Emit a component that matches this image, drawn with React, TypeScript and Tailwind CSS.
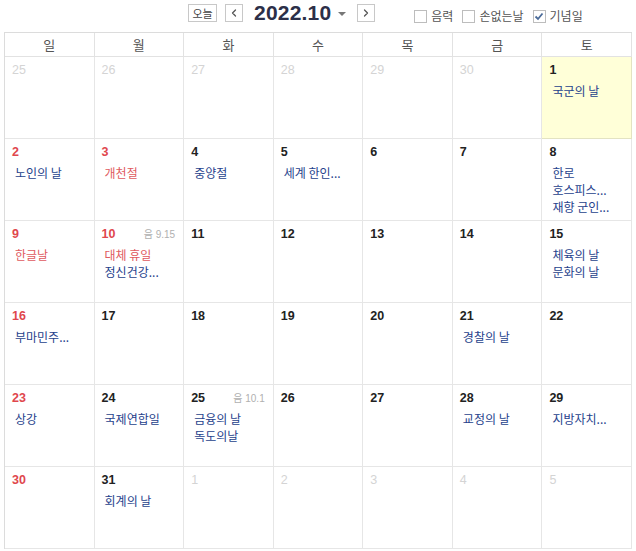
import { ChevronLeft, ChevronRight } from 'lucide-react';

type Ev = { t: string; red?: boolean };
type Day = { d: number; kind: 'other' | 'red' | 'normal'; events?: Ev[]; lunar?: string; today?: boolean };

const WEEKDAYS = ['일', '월', '화', '수', '목', '금', '토'];

const o = (d: number): Day => ({ d, kind: 'other' });
const n = (d: number, events: Ev[] = [], extra: Partial<Day> = {}): Day => ({ d, kind: 'normal', events, ...extra });
const r = (d: number, events: Ev[] = [], extra: Partial<Day> = {}): Day => ({ d, kind: 'red', events, ...extra });

const WEEKS: Day[][] = [
  [o(25), o(26), o(27), o(28), o(29), o(30), n(1, [{ t: '국군의 날' }], { today: true })],
  [
    r(2, [{ t: '노인의 날' }]),
    r(3, [{ t: '개천절', red: true }]),
    n(4, [{ t: '중양절' }]),
    n(5, [{ t: '세계 한인...' }]),
    n(6),
    n(7),
    n(8, [{ t: '한로' }, { t: '호스피스...' }, { t: '재향 군인...' }]),
  ],
  [
    r(9, [{ t: '한글날', red: true }]),
    r(10, [{ t: '대체 휴일', red: true }, { t: '정신건강...' }], { lunar: '9.15' }),
    n(11),
    n(12),
    n(13),
    n(14),
    n(15, [{ t: '체육의 날' }, { t: '문화의 날' }]),
  ],
  [r(16, [{ t: '부마민주...' }]), n(17), n(18), n(19), n(20), n(21, [{ t: '경찰의 날' }]), n(22)],
  [
    r(23, [{ t: '상강' }]),
    n(24, [{ t: '국제연합일' }]),
    n(25, [{ t: '금융의 날' }, { t: '독도의날' }], { lunar: '10.1' }),
    n(26),
    n(27),
    n(28, [{ t: '교정의 날' }]),
    n(29, [{ t: '지방자치...' }]),
  ],
  [r(30), n(31, [{ t: '회계의 날' }]), o(1), o(2), o(3), o(4), o(5)],
];

const KR = { fontFamily: '"Noto Sans CJK KR", "Noto Sans", sans-serif' };
const NUM = { fontFamily: '"Liberation Sans", Arial, sans-serif' };

function Check({ label, checked }: { label: string; checked?: boolean }) {
  return (
    <label className="flex items-center gap-[4px] text-[12px] text-[#555]" style={KR}>
      <span className="flex h-[13px] w-[13px] items-center justify-center border border-[#bdbdbd] bg-white">
        {checked && (
          <svg width="10" height="9" viewBox="0 0 10 9">
            <path d="M1.5 4.5 L4 7 L8.5 1.5" fill="none" stroke="#4b6b99" strokeWidth="1.8" />
          </svg>
        )}
      </span>
      {label}
    </label>
  );
}

function Cell({ day }: { day: Day }) {
  const numColor =
    day.kind === 'other' ? 'text-[#d4d4d4] font-normal' : day.kind === 'red' ? 'text-[#e0474d] font-bold' : 'text-[#222] font-bold';
  return (
    <div
      className={`h-[82px] border-r border-b pl-[7px] pr-[8px] pt-[6px] ${
        day.today ? 'bg-[#ffffd8] border-[#e3e3c2]' : 'border-[#e6e6e6]'
      }`}
    >
      <div className="flex h-[14px] items-center justify-between">
        <span className={`text-[12.5px] leading-[14px] ${numColor}`} style={NUM}>
          {day.d}
        </span>
        {day.lunar && (
          <span className="text-[10px] leading-[14px] text-[#b0b0b0]" style={KR}>
            음<span style={NUM}> {day.lunar}</span>
          </span>
        )}
      </div>
      {day.events && day.events.length > 0 && (
        <div className="mt-[5px] pl-[3px]">
          {day.events.map((e, i) => (
            <div
              key={i}
              className={`whitespace-nowrap text-[12px] leading-[17px] ${e.red ? 'text-[#e05a60]' : 'text-[#26428c]'}`}
              style={KR}
            >
              {e.t}
            </div>
          ))}
        </div>
      )}
    </div>
  );
}

export default function App() {
  return (
    <div className="h-[551px] w-[636px] overflow-hidden bg-white">
      {/* Toolbar */}
      <div className="flex h-[32px] items-start">
        <button
          className="ml-[188px] mt-[4px] flex h-[18px] w-[29px] items-center justify-center border border-[#c8c8c8] bg-white text-[11px] text-[#444]"
          style={KR}
        >
          오늘
        </button>
        <button className="ml-[8px] mt-[4px] flex h-[18px] w-[18px] items-center justify-center border border-[#c8c8c8] bg-white text-[#555]">
          <ChevronLeft size={12} strokeWidth={2.5} />
        </button>
        <div className="ml-[11px] mt-[1px] flex items-center">
          <span className="text-[21px] font-bold leading-[24px] tracking-[0.2px] text-[#2c2f48]" style={NUM}>
            2022.10
          </span>
          <svg className="ml-[7px] mt-[1px]" width="8" height="4" viewBox="0 0 8 4">
            <path d="M0 0 L8 0 L4 4 Z" fill="#777" />
          </svg>
        </div>
        <button className="ml-[11px] mt-[4px] flex h-[18px] w-[18px] items-center justify-center border border-[#c8c8c8] bg-white text-[#555]">
          <ChevronRight size={12} strokeWidth={2.5} />
        </button>
        <div className="ml-[39px] mt-[7px] flex items-center gap-[9px]">
          <Check label="음력" />
          <Check label="손없는날" />
          <Check label="기념일" checked />
        </div>
      </div>

      {/* Calendar */}
      <div className="ml-[4px] w-[628px] border-l border-t border-[#dcdcdc]">
        <div className="grid grid-cols-7">
          {WEEKDAYS.map((w) => (
            <div
              key={w}
              className="flex h-[24px] items-center justify-center border-r border-b border-[#e2e2e2] text-[13px] text-[#555]"
              style={KR}
            >
              {w}
            </div>
          ))}
        </div>
        {WEEKS.map((week, wi) => (
          <div key={wi} className="grid grid-cols-7">
            {week.map((day, di) => (
              <Cell key={di} day={day} />
            ))}
          </div>
        ))}
      </div>
    </div>
  );
}
